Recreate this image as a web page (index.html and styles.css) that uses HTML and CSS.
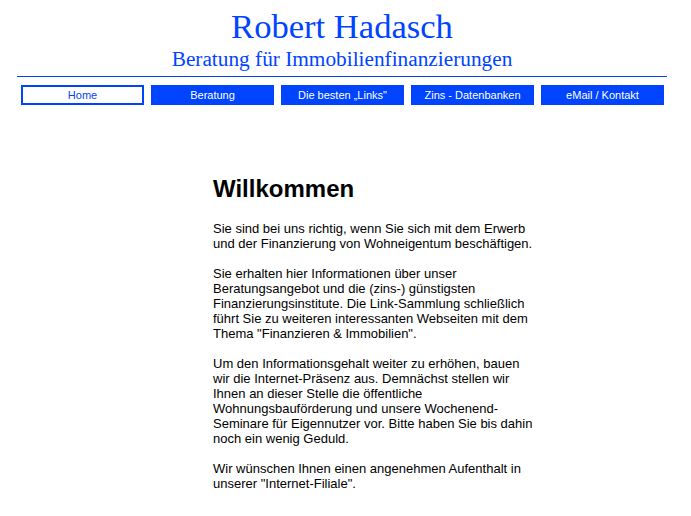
FILE: index.html
```html
<!DOCTYPE html>
<html lang="de">
<head>
<meta charset="utf-8">
<title>Robert Hadasch</title>
<link rel="stylesheet" href="styles.css">
</head>
<body>
<div class="page">
  <header class="head">
    <div class="title">Robert Hadasch</div>
    <div class="subtitle">Beratung für Immobilienfinanzierungen</div>
  </header>
  <nav class="nav">
    <a class="btn active" href="#">Home</a>
    <a class="btn" href="#">Beratung</a>
    <a class="btn" href="#">Die besten „Links"</a>
    <a class="btn" href="#">Zins - Datenbanken</a>
    <a class="btn" href="#">eMail / Kontakt</a>
  </nav>
  <main class="content">
    <h1>Willkommen</h1>
    <p>Sie sind bei uns richtig, wenn Sie sich mit dem Erwerb und der Finanzierung von Wohneigentum beschäftigen.</p>
    <p>Sie erhalten hier Informationen über unser Beratungsangebot und die (zins-) günstigsten Finanzierungsinstitute. Die Link-Sammlung schließlich führt Sie zu weiteren interessanten Webseiten mit dem Thema "Finanzieren &amp; Immobilien".</p>
    <p>Um den Informationsgehalt weiter zu erhöhen, bauen wir die Internet-Präsenz aus. Demnächst stellen wir Ihnen an dieser Stelle die öffentliche Wohnungsbauförderung und unsere Wochenend-Seminare für Eigennutzer vor. Bitte haben Sie bis dahin noch ein wenig Geduld.</p>
    <p>Wir wünschen Ihnen einen angenehmen Aufenthalt in unserer "Internet-Filiale".</p>
  </main>
</div>
</body>
</html>
```
FILE: styles.css
```css
html, body {
  margin: 0;
  padding: 0;
  background: #ffffff;
}
.page {
  width: 650px;
  margin-left: 17px;
}
.head {
  text-align: center;
  color: #0044ff;
  font-family: "Liberation Serif", "Times New Roman", serif;
  border-bottom: 1px solid #0044ff;
  padding-top: 6px;
  padding-bottom: 4px;
}
.title {
  font-size: 34.6px;
  line-height: 40px;
}
.subtitle {
  font-size: 21.3px;
  line-height: 26px;
}
.nav {
  display: flex;
  gap: 7px;
  padding-left: 4px;
  margin-top: 8px;
}
.btn {
  box-sizing: border-box;
  width: 123px;
  height: 20px;
  background: #0044ff;
  color: #ffffff;
  font-family: "Liberation Sans", Arial, sans-serif;
  font-size: 11px;
  line-height: 20px;
  text-align: center;
  text-decoration: none;
}
.btn.active {
  background: #ffffff;
  color: #0044ff;
  border: 2px solid #0044ff;
  line-height: 16px;
}
.content {
  width: 325px;
  margin-left: 196px;
  margin-top: 70px;
  font-family: "Liberation Sans", Arial, sans-serif;
  color: #000000;
}
.content h1 {
  font-size: 24px;
  line-height: 28px;
  margin: 0 0 18px 0;
}
.content p {
  font-size: 13px;
  line-height: 15px;
  margin: 0 0 15px 0;
}
```
